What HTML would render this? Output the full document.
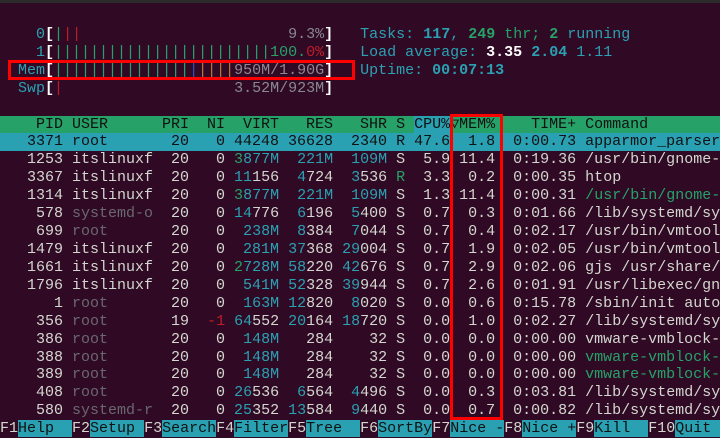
<!DOCTYPE html>
<html><head><meta charset="utf-8"><style>
html,body{margin:0;padding:0;background:#300a24;width:720px;height:438px;overflow:hidden}
.top{position:absolute;left:0;top:0;width:720px;height:3px;background:#2b2b2b}
pre{position:absolute;left:0;top:8px;margin:0;font-family:"Liberation Mono",monospace;font-size:15px;line-height:17.93px;color:#d3d7cf;white-space:pre;width:720px;overflow:hidden}
.l{display:block;height:17.93px;overflow:hidden;width:720px}
.c{color:#2aa1b3}.g{color:#26a269}.r{color:#c01c28}.d{color:#6a6870}.b{font-weight:bold}.w{color:#fff}.gr{color:#8a8890}.bl{color:#3050c0}.o{color:#b8763a}
.hdr{background:#26a269;color:#111}
.hc{background:#2aa1b3}
.sel{background:#2aa1b3;color:#111}
.k{background:#2aa1b3;color:#111}
.box{position:absolute;border:3px solid #f00;box-sizing:border-box}
</style></head><body>
<div class="top"></div>
<pre><span class="l"> </span><span class="l">    <span class="c">0</span><span class="w b">[</span><span class="g">|</span><span class="r">||</span>                       <span class="gr">9.3%</span><span class="w b">]</span>   <span class="c">Tasks: </span><span class="c b">117</span><span class="c">, </span><span class="g b">249</span><span class="g"> thr; </span><span class="g b">2</span><span class="c"> running</span></span><span class="l">    <span class="c">1</span><span class="w b">[</span><span class="g">||||||||||||||||||||||||100.</span><span class="r">0%</span><span class="w b">]</span>   <span class="c">Load average: </span><span class="w b">3.35 </span><span class="c b">2.04 </span><span class="c">1.11</span></span><span class="l">  <span class="c">Mem</span><span class="w b">[</span><span class="g">|||||||||||||||</span><span class="bl">|</span><span class="o">||||</span><span class="gr">950M/1.90G</span><span class="w b">]</span>   <span class="c">Uptime: </span><span class="c b">00:07:13</span></span><span class="l">  <span class="c">Swp</span><span class="w b">[</span><span class="r">|</span>                   <span class="gr">3.52M/923M</span><span class="w b">]</span></span><span class="l"> </span><span class="l hdr">    PID USER      PRI  NI  VIRT   RES   SHR S <span class="hc">CPU%</span>▽MEM%    TIME+ Command                 </span><span class="l sel">   3371 root       20   0 44248 36628  2340 R 47.6  1.8  0:00.73 apparmor_parser         </span><span class="l">   1253 itslinuxf  20   0 <span class="g">3</span><span class="c">877M</span>  <span class="c">221M</span>  <span class="c">109M</span> S  5.9 11.4  0:19.36 /usr/bin/gnome-</span><span class="l">   3367 itslinuxf  20   0 <span class="c">11</span>156  <span class="c">4</span>724  <span class="c">3</span>536 <span class="g">R</span>  3.3  0.2  0:00.35 htop</span><span class="l">   1314 itslinuxf  20   0 <span class="g">3</span><span class="c">877M</span>  <span class="c">221M</span>  <span class="c">109M</span> S  1.3 11.4  0:00.31 <span class="g">/usr/bin/gnome-</span></span><span class="l">    578 <span class="d">systemd-o</span>  20   0 <span class="c">14</span>776  <span class="c">6</span>196  <span class="c">5</span>400 S  0.7  0.3  0:01.66 /lib/systemd/sy</span><span class="l">    699 <span class="d">root</span>       20   0  <span class="c">238M</span>  <span class="c">8</span>384  <span class="c">7</span>044 S  0.7  0.4  0:02.17 /usr/bin/vmtool</span><span class="l">   1479 itslinuxf  20   0  <span class="c">281M</span> <span class="c">37</span>368 <span class="c">29</span>004 S  0.7  1.9  0:02.05 /usr/bin/vmtool</span><span class="l">   1661 itslinuxf  20   0 <span class="g">2</span><span class="c">728M</span> <span class="c">58</span>220 <span class="c">42</span>676 S  0.7  2.9  0:02.06 gjs /usr/share/</span><span class="l">   1796 itslinuxf  20   0  <span class="c">541M</span> <span class="c">52</span>328 <span class="c">39</span>944 S  0.7  2.6  0:01.91 /usr/libexec/gn</span><span class="l">      1 <span class="d">root</span>       20   0  <span class="c">163M</span> <span class="c">12</span>820  <span class="c">8</span>020 S  0.0  0.6  0:15.78 /sbin/init auto</span><span class="l">    356 <span class="d">root</span>       19  <span class="r">-1</span> <span class="c">64</span>552 <span class="c">20</span>164 <span class="c">18</span>720 S  0.0  1.0  0:02.27 /lib/systemd/sy</span><span class="l">    386 <span class="d">root</span>       20   0  <span class="c">148M</span>   284    32 S  0.0  0.0  0:00.00 vmware-vmblock-</span><span class="l">    388 <span class="d">root</span>       20   0  <span class="c">148M</span>   284    32 S  0.0  0.0  0:00.00 <span class="g">vmware-vmblock-</span></span><span class="l">    389 <span class="d">root</span>       20   0  <span class="c">148M</span>   284    32 S  0.0  0.0  0:00.00 <span class="g">vmware-vmblock-</span></span><span class="l">    408 <span class="d">root</span>       20   0 <span class="c">26</span>536  <span class="c">6</span>564  <span class="c">4</span>496 S  0.0  0.3  0:03.81 /lib/systemd/sy</span><span class="l">    580 <span class="d">systemd-r</span>  20   0 <span class="c">25</span>352 <span class="c">13</span>584  <span class="c">9</span>440 S  0.0  0.7  0:00.82 /lib/systemd/sy</span><span class="l">F1<span class="k">Help  </span>F2<span class="k">Setup </span>F3<span class="k">Search</span>F4<span class="k">Filter</span>F5<span class="k">Tree  </span>F6<span class="k">SortBy</span>F7<span class="k">Nice -</span>F8<span class="k">Nice +</span>F9<span class="k">Kill  </span>F10<span class="k">Quit     </span></span></pre>
<div class="box" style="left:8px;top:60px;width:347px;height:20px"></div>
<div class="box" style="left:450px;top:114px;width:53px;height:306px"></div>
</body></html>
